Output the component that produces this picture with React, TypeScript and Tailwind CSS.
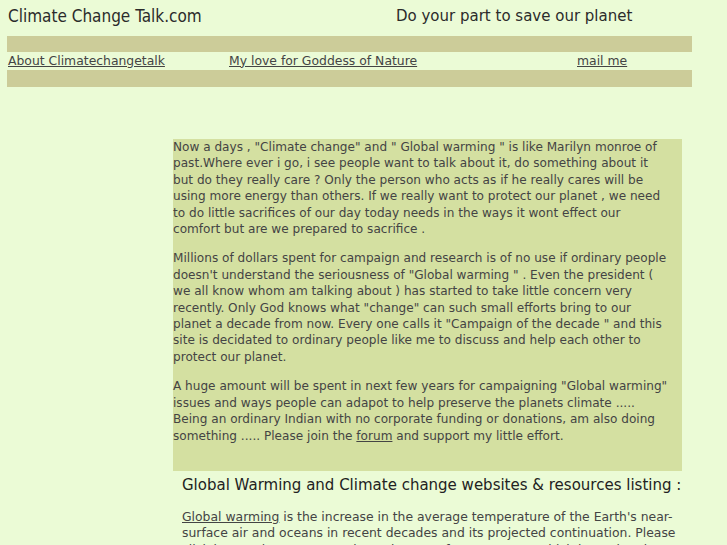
import React from "react";

export default function App() {
  return (
    <div className="min-h-[545px] w-full bg-[#ebfbd6] text-[#333]" style={{ fontFamily: '"DejaVu Sans", Verdana, sans-serif' }}>
      <div className="flex w-[685px] ml-[7px] pt-[6px] h-[36px]">
        <div className="w-[389px] pl-[1px] text-[17px] leading-[20px] text-[#2b2b2b]" style={{ fontFamily: '"DejaVu Sans Condensed", "DejaVu Sans", sans-serif' }}>
          Climate Change Talk.com
        </div>
        <div className="text-[15px] leading-[20px] text-[#2b2b2b]">Do your part to save our planet</div>
      </div>
      <div className="ml-[7px] w-[685px] h-[16px] bg-[#cccc99]" />
      <div className="ml-[7px] w-[685px] h-[18px] flex items-center text-[12.4px] text-[#444]">
        <a className="underline ml-[1px] w-[221px]">About Climatechangetalk</a>
        <a className="underline w-[348px]">My love for Goddess of Nature</a>
        <a className="underline">mail me</a>
      </div>
      <div className="ml-[7px] w-[685px] h-[17px] bg-[#cccc99]" />
      <div className="ml-[173px] w-[509px] mt-[52px]">
        <div className="bg-[#d4e0a1] text-[12.1px] leading-[16.4px] text-[#444] pb-[27px]">
          <p>
            Now a days , "Climate change" and " Global warming " is like Marilyn monroe of<br />
            past.Where ever i go, i see people want to talk about it, do something about it<br />
            but do they really care ? Only the person who acts as if he really cares will be<br />
            using more energy than others. If we really want to protect our planet , we need<br />
            to do little sacrifices of our day today needs in the ways it wont effect our<br />
            comfort but are we prepared to sacrifice .
          </p>
          <p className="mt-[13px]">
            Millions of dollars spent for campaign and research is of no use if ordinary people<br />
            doesn't understand the seriousness of "Global warming " . Even the president (<br />
            we all know whom am talking about ) has started to take little concern very<br />
            recently. Only God knows what "change" can such small efforts bring to our<br />
            planet a decade from now. Every one calls it "Campaign of the decade " and this<br />
            site is decidated to ordinary people like me to discuss and help each other to<br />
            protect our planet.
          </p>
          <p className="mt-[13px]">
            A huge amount will be spent in next few years for campaigning "Global warming"<br />
            issues and ways people can adapot to help preserve the planets climate .....<br />
            Being an ordinary Indian with no corporate funding or donations, am also doing<br />
            something ..... Please join the <a className="underline">forum</a> and support my little effort.
          </p>
        </div>
        <div className="pl-[9px] pr-[2px]">
          <h2 className="mt-[4px] text-[15px] leading-[20px] font-normal text-[#222] whitespace-nowrap">
            Global Warming and Climate change websites &amp; resources listing :
          </h2>
          <p className="mt-[14px] text-[12.4px] leading-[16.5px] text-[#444]">
            <a className="underline">Global warming</a> is the increase in the average temperature of the Earth's near-surface air and oceans in recent decades and its projected continuation. Please click here to learn more and see the most frequent news which is read and searched on this topic.
          </p>
        </div>
      </div>
    </div>
  );
}
